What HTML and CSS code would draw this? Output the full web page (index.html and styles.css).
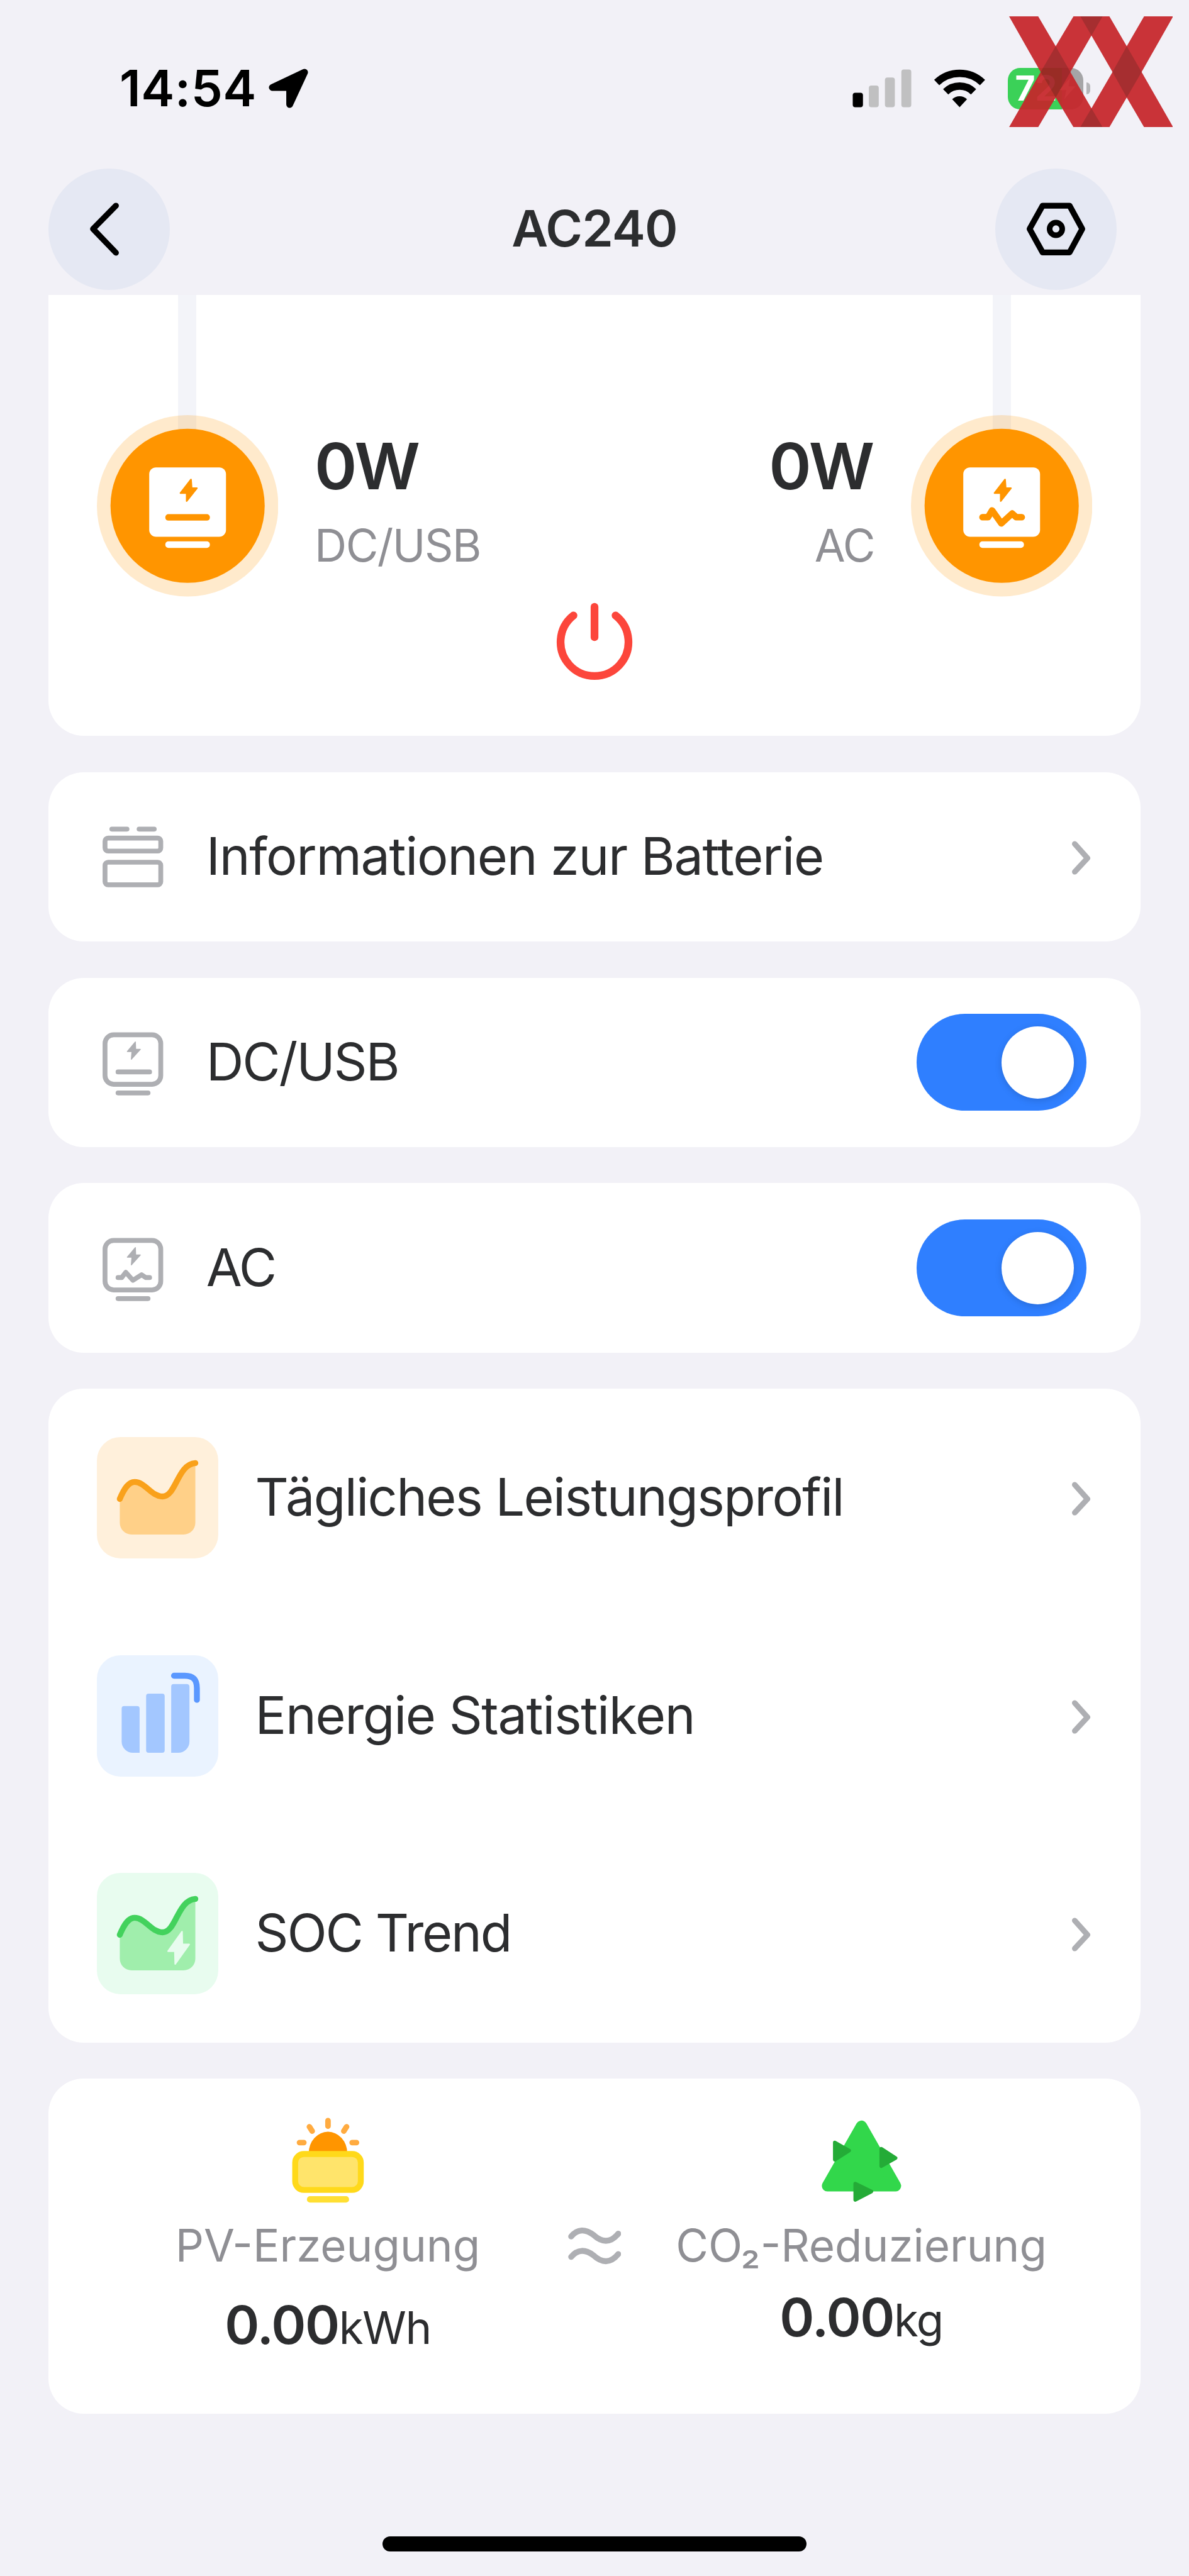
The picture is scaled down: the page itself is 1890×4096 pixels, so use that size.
FILE: index.html
```html
<!DOCTYPE html>
<html lang="de">
<head>
    <meta charset="UTF-8">
    <meta name="viewport" content="width=device-width, initial-scale=1.0">
    <title>AC240</title>
    <link rel="stylesheet" href="styles.css">
</head>
<body>
    <header class="status-bar">
        <div class="status-left">
            <span class="time">14:54</span>
            <svg class="location" viewBox="0 0 64 64"><path d="M58 6 L6 30.500 H34 V58 Z" fill="#000" stroke="#000" stroke-width="11" stroke-linejoin="round"/></svg>
        </div>
        <div class="status-right">
            <svg class="signal" viewBox="0 0 96 62">
                <rect x="0.500" y="38" width="16.500" height="23.500" rx="4"/>
                <g fill="#c0c0c1">
                    <rect x="26.500" y="26.500" width="16" height="35" rx="4"/>
                    <rect x="52.500" y="13.500" width="16" height="48" rx="4"/>
                    <rect x="79" y="0.500" width="16" height="61" rx="4"/>
                </g>
            </svg>
            <svg class="wifi" viewBox="0 0 82 62">
                <path d="M4 21.500 A53.500 53.500 0 0 1 78 21.500" fill="none" stroke="#000" stroke-width="12"/>
                <path d="M18.500 36.500 A32 32 0 0 1 63.500 36.500" fill="none" stroke="#000" stroke-width="12"/>
                <path d="M41 61.500 L29 48.500 A17.500 17.500 0 0 1 53 48.500 Z"/>
            </svg>
            <div class="battery">
                <div class="battery-body">
                    <span>72</span>
                    <svg viewBox="0 0 30 40"><path d="M20 0 L0 23 H13 L9 40 L30 16 H17 Z" fill="#fff"/></svg>
                </div>
                <div class="battery-nub"></div>
            </div>
        </div>
    </header>

    <svg class="watermark" viewBox="0 0 265 179">
        <path d="M0 0 H47 L75.300 48.300 L104 0 H162 L190 48.300 L218 0 H265 L214 90 L265 179 H218 L190 131 L162 179 H104 L75.300 131 L47 179 H0 L51 90 Z M133 31 L99 90 L133 148.500 L167 90 Z" fill="#c6252a" fill-rule="evenodd"/>
        <g fill="#a12022">
            <path d="M75.300 48.300 L99 90 L75.300 131 L51 90 Z"/>
            <path d="M190 48.300 L214 90 L190 131 L167 90 Z"/>
            <path d="M115 0 H151 L133 31 Z"/>
            <path d="M115 179 H151 L133 148.500 Z"/>
        </g>
    </svg>

    <nav class="nav">
        <button class="round-btn">
            <svg viewBox="0 0 196 196"><path d="M109 60 L72 97.500 L109 136" fill="none" stroke="#000" stroke-width="9.500" stroke-linecap="round" stroke-linejoin="round"/></svg>
        </button>
        <h1>AC240</h1>
        <button class="round-btn">
            <svg viewBox="0 0 196 196" fill="none" stroke="#000" stroke-linejoin="round">
                <path d="M76.500 60 H120 L140.500 97.500 L120 135.500 H76.500 L55.500 97.500 Z" stroke-width="9.500"/>
                <circle cx="98" cy="97.500" r="10.200" stroke-width="9"/>
            </svg>
        </button>
    </nav>

    <main>
        <section class="card power-card">
            <div class="outputs">
                <div class="output">
                    <div class="node">
                        <svg viewBox="0 0 293 293">
                            <circle cx="146.500" cy="146.500" r="146.500" fill="#ff9500" opacity="0.200"/>
                            <circle cx="146.500" cy="146.500" r="124.500" fill="#ff9500"/>
                            <rect x="84.500" y="84.500" width="124" height="112" rx="11" fill="#fff"/>
                            <rect x="110.500" y="204" width="72" height="10.500" rx="5" fill="#fff"/>
                            <rect x="110.500" y="160" width="72" height="10.500" rx="5" fill="#ff9500"/>
                            <path d="M152 104 L135 126 H145 V139 L161.500 118 H153 Z" fill="#ff9500" stroke="#ff9500" stroke-width="2.500" stroke-linejoin="round"/>
                        </svg>
                    </div>
                    <div class="reading">
                        <div class="watts">0W</div>
                        <div class="caption">DC/USB</div>
                    </div>
                </div>
                <div class="output output-right">
                    <div class="reading">
                        <div class="watts">0W</div>
                        <div class="caption">AC</div>
                    </div>
                    <div class="node">
                        <svg viewBox="0 0 293 293">
                            <circle cx="146.500" cy="146.500" r="146.500" fill="#ff9500" opacity="0.200"/>
                            <circle cx="146.500" cy="146.500" r="124.500" fill="#ff9500"/>
                            <rect x="84.500" y="84.500" width="124" height="112" rx="11" fill="#fff"/>
                            <rect x="110.500" y="204" width="72" height="10.500" rx="5" fill="#fff"/>
                            <path d="M115.500 165 H124.500 L131 154 L146 175 L163.500 159 L170 165 H179" fill="none" stroke="#ff9500" stroke-width="10.500" stroke-linecap="round" stroke-linejoin="round"/>
                            <path d="M152 104 L135 126 H145 V139 L161.500 118 H153 Z" fill="#ff9500" stroke="#ff9500" stroke-width="2.500" stroke-linejoin="round"/>
                        </svg>
                    </div>
                </div>
            </div>
            <svg class="power-icon" viewBox="0 0 124 126" fill="none" stroke="#fc463b" stroke-width="12.500" stroke-linecap="round">
                <path d="M62 7 V56"/>
                <path d="M28 21 A54.800 54.800 0 1 0 96 21"/>
            </svg>
        </section>

        <section class="card row-card">
            <svg class="row-icon" viewBox="0 0 98 110" fill="none" stroke="#aeafb3" stroke-width="7.800" stroke-linecap="round">
                <path d="M15 10.500 H39.500 M59 10.500 H83.500"/>
                <rect x="4" y="25" width="90" height="21" rx="5"/>
                <rect x="4" y="64" width="90" height="36.500" rx="5"/>
            </svg>
            <span class="row-label">Informationen zur Batterie</span>
            <svg class="chevron" viewBox="0 0 32 60"><path d="M5.500 9 L26 32 L5.500 54" fill="none" stroke="#aeafb3" stroke-width="9" stroke-linecap="round" stroke-linejoin="round"/></svg>
        </section>

        <section class="card row-card">
            <svg class="row-icon" viewBox="0 0 98 110" fill="none" stroke="#aeafb3" stroke-width="7.800" stroke-linecap="round">
                <rect x="4" y="10.500" width="90" height="80" rx="14"/>
                <path d="M25 70.500 H76 M25 104.500 H73.500"/>
                <path d="M53 22 L40 37.500 H47.500 L46.500 50 L61 34 H53.500 Z" fill="#aeafb3" stroke-width="1.500" stroke-linejoin="round"/>
            </svg>
            <span class="row-label tight">DC/USB</span>
            <div class="toggle"><div class="knob"></div></div>
        </section>

        <section class="card row-card">
            <svg class="row-icon" viewBox="0 0 98 110" fill="none" stroke="#aeafb3" stroke-width="7.800" stroke-linecap="round">
                <rect x="4" y="10.500" width="90" height="80" rx="14"/>
                <path d="M25 70.500 H31 L37.500 62 L49 75 L63 66 L70 70.500 H76" stroke-linejoin="round"/>
                <path d="M25 104.500 H73.500"/>
                <path d="M53 22 L40 37.500 H47.500 L46.500 50 L61 34 H53.500 Z" fill="#aeafb3" stroke-width="1.500" stroke-linejoin="round"/>
            </svg>
            <span class="row-label tight">AC</span>
            <div class="toggle"><div class="knob"></div></div>
        </section>

        <section class="card list-card">
            <div class="list-row">
                <svg class="tile" viewBox="0 0 196 196">
                    <rect width="196" height="196" rx="38" fill="#fff0db"/>
                    <path d="M37 100 C45 81 52 72.500 61 72.500 C78 72.500 88 96 106 96 C128 96 130 42 159 42 V138.500 A19 19 0 0 1 140 157.500 H56 A19 19 0 0 1 37 138.500 Z" fill="#ffd088"/>
                    <path d="M37 100 C45 81 52 72.500 61 72.500 C78 72.500 88 96 106 96 C128 96 130 44 159 42" fill="none" stroke="#f9a11b" stroke-width="9.500" stroke-linecap="round"/>
                </svg>
                <span class="row-label snug">Tägliches Leistungsprofil</span>
                <svg class="chevron" viewBox="0 0 32 60"><path d="M5.500 9 L26 32 L5.500 54" fill="none" stroke="#aeafb3" stroke-width="9" stroke-linecap="round" stroke-linejoin="round"/></svg>
            </div>
            <div class="list-row">
                <svg class="tile" viewBox="0 0 196 196">
                    <rect width="196" height="196" rx="38" fill="#eaf3ff"/>
                    <g fill="#a3c7ff">
                        <path d="M44 82 H65 A4 4 0 0 1 69 86 V157.500 H58 A18 18 0 0 1 40 139.500 V86 A4 4 0 0 1 44 82 Z"/>
                        <rect x="79.500" y="62" width="30" height="95.500" rx="4"/>
                        <path d="M124 46.500 H145 A4 4 0 0 1 149.500 50.500 V139.500 A18 18 0 0 1 131.500 157.500 H120 V50.500 A4 4 0 0 1 124 46.500 Z"/>
                    </g>
                    <path d="M124.500 33 H142 C156 33 161.500 40 161.500 53 V72" fill="none" stroke="#5b98ff" stroke-width="9.500" stroke-linecap="round"/>
                </svg>
                <span class="row-label">Energie Statistiken</span>
                <svg class="chevron" viewBox="0 0 32 60"><path d="M5.500 9 L26 32 L5.500 54" fill="none" stroke="#aeafb3" stroke-width="9" stroke-linecap="round" stroke-linejoin="round"/></svg>
            </div>
            <div class="list-row">
                <svg class="tile" viewBox="0 0 196 196">
                    <rect width="196" height="196" rx="38" fill="#e8fcef"/>
                    <path d="M37 100 C45 81 52 72.500 61 72.500 C78 72.500 88 96 106 96 C128 96 130 42 159 42 V138.500 A19 19 0 0 1 140 157.500 H56 A19 19 0 0 1 37 138.500 Z" fill="#a0eeac"/>
                    <path d="M37 100 C45 81 52 72.500 61 72.500 C78 72.500 88 96 106 96 C128 96 130 44 159 42" fill="none" stroke="#43d25d" stroke-width="9.500" stroke-linecap="round"/>
                    <path d="M137.500 95 L115 126.500 H126 L126.500 147 L149 115.500 H138 Z" fill="#e8fcef" stroke="#e8fcef" stroke-width="2.500" stroke-linejoin="round"/>
                </svg>
                <span class="row-label tight">SOC Trend</span>
                <svg class="chevron" viewBox="0 0 32 60"><path d="M5.500 9 L26 32 L5.500 54" fill="none" stroke="#aeafb3" stroke-width="9" stroke-linecap="round" stroke-linejoin="round"/></svg>
            </div>
        </section>

        <section class="card eco-card">
            <div class="eco">
                <svg class="eco-icon" viewBox="0 0 145 145">
                    <path d="M41.500 60 A31 34 0 0 1 103.500 60 Z" fill="#ff9500"/>
                    <g stroke="#ffab40" stroke-width="9" stroke-linecap="round">
                        <path d="M72.500 8 V17 M42.500 18 L47 25 M102.500 18 L98 25 M26.500 43.500 H33.500 M111.500 43.500 H118.500"/>
                    </g>
                    <rect x="19.500" y="62" width="106" height="58" rx="14" fill="#ffe46b" stroke="#ffd91a" stroke-width="9.500"/>
                    <rect x="38.500" y="130" width="68" height="10.500" rx="5" fill="#ffdf33"/>
                </svg>
                <div class="caption eco-caption">PV-Erzeugung</div>
                <div class="eco-value">0.00<span>kWh</span></div>
            </div>
            <svg class="approx" viewBox="0 0 86 80" fill="none" stroke="#aeafb3" stroke-width="9.500" stroke-linecap="round">
                <path d="M5 24.500 C15 12 28 12 41 22 C54 34 68 36 81 20"/>
                <path d="M5 57.500 C15 45 28 45 41 55 C54 67 68 69 81 53"/>
            </svg>
            <div class="eco">
                <svg class="eco-icon" viewBox="0 0 145 145">
                    <path d="M72.500 17 L127.500 113.500 H17.500 Z" fill="#32d74b" stroke="#32d74b" stroke-width="18" stroke-linejoin="round"/>
                    <g fill="#24ab37" stroke="#24ab37" stroke-width="6" stroke-linejoin="round">
                        <path d="M29.500 43.500 L52.500 56.500 L29.500 71 Z"/>
                        <path d="M104.500 53.500 L127.500 68.500 L104.500 81.500 Z"/>
                        <path d="M62.500 110 L88.500 122.500 L62.500 136 Z"/>
                    </g>
                </svg>
                <div class="caption eco-caption">CO₂-Reduzierung</div>
                <div class="eco-value eco-value-high">0.00<span>kg</span></div>
            </div>
        </section>
    </main>

    <div class="home-indicator"></div>
</body>
</html>
```
FILE: styles.css
```css
html {
    font-size: 98.4375px;
}
body {
    margin: 0;
    height: 4096px;
    display: flex;
    flex-direction: column;
    position: relative;
    overflow: hidden;
    background-color: #f2f1f7;
    color: #2c2d2f;
    font-family: Inter, "Liberation Sans", sans-serif;
}
svg {
    display: block;
    flex: none;
}
.status-bar {
    height: 2.72rem;
    padding: 0.14rem 1.6rem 0 1.93rem;
    box-sizing: border-box;
    display: flex;
    align-items: center;
    justify-content: space-between;
    color: #000;
}
.status-left, .status-right {
    display: flex;
    align-items: center;
}
.time {
    width: 2.41rem;
    font-size: 0.81rem;
    font-weight: 600;
    line-height: 1;
    white-space: nowrap;
    letter-spacing: 0.006em;
}
.location {
    width: 0.64rem;
    height: 0.64rem;
}
.signal {
    width: 0.96rem;
    height: 0.62rem;
}
.wifi {
    width: 0.82rem;
    height: 0.62rem;
    margin: 0 0.36rem;
}
.battery {
    display: flex;
    align-items: center;
}
.battery-body {
    width: 1.22rem;
    height: 0.67rem;
    border-radius: 0.2rem;
    background: linear-gradient(to right, #3bd158 72%, #a5a5a7 72%);
    display: flex;
    align-items: center;
    justify-content: center;
    gap: 0.04rem;
    color: white;
    font-size: 0.56rem;
    font-weight: 700;
    line-height: 1;
}
.battery-body svg {
    width: 0.26rem;
    height: 0.4rem;
}
.battery-nub {
    width: 0.06rem;
    height: 0.19rem;
    margin-left: 0.05rem;
    border-radius: 0 0.1rem 0.1rem 0;
    background-color: #b5b5b8;
}
.watermark {
    position: absolute;
    top: 0.26rem;
    right: 0.26rem;
    width: 2.65rem;
    height: 1.79rem;
    opacity: 0.93;
}
.nav {
    height: 1.96rem;
    padding: 0 1.17rem 0 0.78rem;
    display: flex;
    align-items: center;
}
.round-btn {
    width: 1.96rem;
    height: 1.96rem;
    padding: 0;
    border: none;
    border-radius: 50%;
    background-color: #e5e8f3;
    cursor: pointer;
}
.round-btn svg {
    width: 100%;
    height: 100%;
}
.nav h1 {
    flex: 1;
    margin: 0 0 0 0.39rem;
    text-align: center;
    font-size: 0.81rem;
    font-weight: 600;
    line-height: 1;
    letter-spacing: -0.01em;
}
main {
    margin: 0.087rem 0.78rem 0;
    display: flex;
    flex-direction: column;
    gap: 0.584rem;
}
.card {
    background-color: white;
    border-radius: 0.57rem;
    box-sizing: border-box;
}
.power-card {
    height: 7.12rem;
    padding: 1.94rem 0.78rem 0;
    border-radius: 0 0 0.57rem 0.57rem;
}
.outputs {
    display: flex;
    justify-content: space-between;
}
.output {
    display: flex;
    align-items: center;
    gap: 0.59rem;
}
.output-right {
    text-align: right;
}
.node {
    position: relative;
    width: 2.93rem;
    height: 2.93rem;
}
/* line coming down from the top of the card */
.node::before {
    content: "";
    position: absolute;
    left: 1.317rem;
    top: -1.94rem;
    width: 0.295rem;
    height: 2.4rem;
    background-color: #f3f4f9;
}
.node svg {
    position: relative;
    width: 100%;
    height: 100%;
}
.watts {
    font-size: 1.04rem;
    font-weight: 600;
    line-height: 1.28rem;
    letter-spacing: -0.04em;
}
.output-right .watts {
    margin-right: 0.04rem;
}
.caption {
    font-size: 0.72rem;
    line-height: 1.28rem;
    letter-spacing: -0.022em;
    color: #8f8f94;
    white-space: nowrap;
}
.power-icon {
    width: 1.24rem;
    height: 1.26rem;
    margin: 0.1rem auto 0;
}
.row-card {
    height: 2.737rem;
    padding: 0 0.88rem;
    display: flex;
    align-items: center;
}
.row-icon {
    width: 0.98rem;
    height: 1.1rem;
    margin-right: 0.69rem;
}
.row-label {
    flex: 1;
    font-size: 0.84rem;
    line-height: 1;
    letter-spacing: -0.016em;
    padding-bottom: 0.02rem;
    white-space: nowrap;
}
.row-label.snug {
    letter-spacing: -0.02em;
}
.row-label.tight {
    letter-spacing: -0.026em;
}
.chevron {
    width: 0.32rem;
    height: 0.6rem;
    margin-right: -0.08rem;
}
.toggle {
    width: 2.74rem;
    height: 1.56rem;
    padding: 0.195rem;
    box-sizing: border-box;
    border-radius: 0.78rem;
    background-color: #2f7fff;
    display: flex;
    justify-content: flex-end;
}
.knob {
    width: 1.17rem;
    height: 1.17rem;
    border-radius: 50%;
    background-color: white;
    box-shadow: 0 0.03rem 0.12rem rgba(0,0,0,0.15);
}
.list-card {
    padding: 0.78rem 0.88rem 0.78rem 0.78rem;
    display: flex;
    flex-direction: column;
    gap: 1.56rem;
}
.list-row {
    display: flex;
    align-items: center;
}
.tile {
    width: 1.96rem;
    height: 1.96rem;
    margin-right: 0.6rem;
}
.eco-card {
    height: 5.41rem;
    padding: 0.6rem 0.635rem 0;
    display: flex;
}
.eco {
    flex: 1;
    display: flex;
    flex-direction: column;
    align-items: center;
}
.eco-icon {
    width: 1.45rem;
    height: 1.45rem;
}
.eco-caption {
    line-height: 1.3rem;
    letter-spacing: 0;
}
.eco-value {
    font-size: 0.85rem;
    font-weight: 600;
    line-height: 1.25rem;
    letter-spacing: -0.018em;
}
.eco-value-high {
    line-height: 1.01rem;
}
.eco-value span {
    font-size: 0.72rem;
    font-weight: 400;
    line-height: 0;
}
.approx {
    width: 0.86rem;
    height: 0.8rem;
    margin-top: 1.705rem;
}
.home-indicator {
    width: 6.84rem;
    height: 0.245rem;
    margin: auto auto 0.395rem;
    border-radius: 0.13rem;
    background-color: #000;
}
```
